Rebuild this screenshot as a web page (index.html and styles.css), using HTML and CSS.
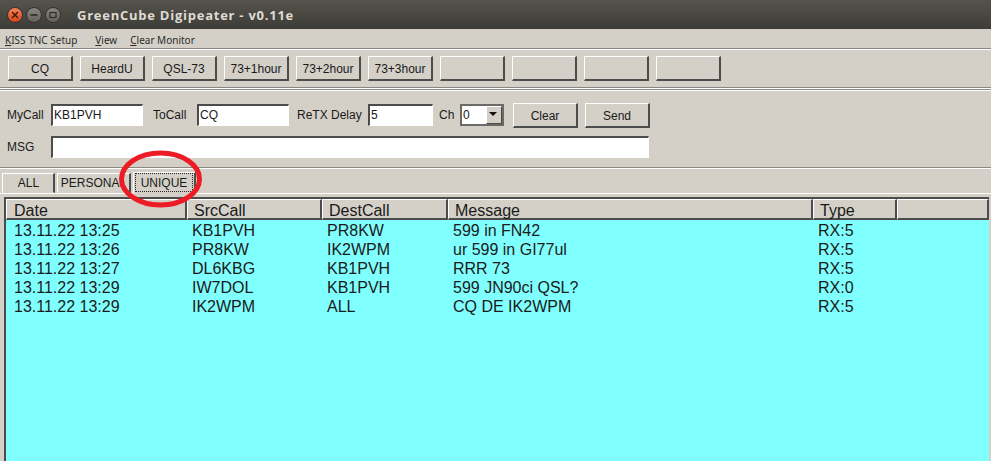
FILE: index.html
```html
<!DOCTYPE html>
<html lang="en">
<head>
    <meta charset="UTF-8">
    <title>GreenCube Digipeater - v0.11e</title>
    <link rel="stylesheet" href="styles.css">
</head>
<body>
    <div class="window">
        <div class="titlebar">
            <div class="win-buttons">
                <span class="win-btn win-close">
                    <svg width="8" height="8" viewBox="0 0 8 8"><path d="M1 1L7 7M7 1L1 7" stroke="#4a1a08" stroke-width="1.6"/></svg>
                </span>
                <span class="win-btn">
                    <svg width="8" height="8" viewBox="0 0 8 8"><path d="M0.5 4H7.5" stroke="#2e2d29" stroke-width="1.6"/></svg>
                </span>
                <span class="win-btn">
                    <svg width="8" height="8" viewBox="0 0 8 8"><rect x="1" y="1.5" width="6" height="5" fill="none" stroke="#2e2d29" stroke-width="1.2"/></svg>
                </span>
            </div>
            <div class="title">GreenCube Digipeater - v0.11e</div>
        </div>

        <div class="menubar">
            <span class="menu-item menu-kiss"><u>K</u>ISS TNC Setup</span>
            <span class="menu-item menu-view"><u>V</u>iew</span>
            <span class="menu-item"><u>C</u>lear Monitor</span>
        </div>

        <div class="toolbar">
            <button class="btn">CQ</button>
            <button class="btn">HeardU</button>
            <button class="btn">QSL-73</button>
            <button class="btn">73+1hour</button>
            <button class="btn">73+2hour</button>
            <button class="btn">73+3hour</button>
            <button class="btn"></button>
            <button class="btn"></button>
            <button class="btn"></button>
            <button class="btn"></button>
        </div>

        <div class="compose">
            <div class="compose-row">
                <label class="lbl lbl-mycall">MyCall</label>
                <div class="field field-call">KB1PVH</div>
                <label class="lbl lbl-tocall">ToCall</label>
                <div class="field field-call">CQ</div>
                <label class="lbl lbl-retx">ReTX Delay</label>
                <div class="field field-delay">5</div>
                <label class="lbl lbl-ch">Ch</label>
                <div class="combo">
                    <span class="combo-value">0</span>
                    <span class="combo-arrow"></span>
                </div>
                <button class="btn btn-clear">Clear</button>
                <button class="btn btn-send">Send</button>
            </div>
            <div class="compose-row msg-row">
                <label class="lbl lbl-mycall">MSG</label>
                <div class="field field-msg"></div>
            </div>
        </div>

        <div class="tabs">
            <div class="tab tab-all">ALL</div>
            <div class="tab tab-personal">PERSONAL</div>
            <div class="tab tab-unique"><span class="tab-focus">UNIQUE</span></div>
            <!-- hand drawn circle over the tab -->
            <svg class="circle" width="86" height="62" viewBox="0 0 86 62">
                <ellipse cx="41.5" cy="31" rx="39" ry="26" fill="none" stroke="#ed1c24" stroke-width="5"/>
            </svg>
        </div>

        <div class="monitor">
            <div class="head">
                <div class="head-cell col-date">Date</div>
                <div class="head-cell col-src">SrcCall</div>
                <div class="head-cell col-dest">DestCall</div>
                <div class="head-cell col-msg">Message</div>
                <div class="head-cell col-type">Type</div>
                <div class="head-cell col-rest"></div>
            </div>
            <div class="rows">
                <div class="row"><span class="col-date">13.11.22 13:25</span><span class="col-src">KB1PVH</span><span class="col-dest">PR8KW</span><span class="col-msg">599 in FN42</span><span class="col-type">RX:5</span></div>
                <div class="row"><span class="col-date">13.11.22 13:26</span><span class="col-src">PR8KW</span><span class="col-dest">IK2WPM</span><span class="col-msg">ur 599 in GI77ul</span><span class="col-type">RX:5</span></div>
                <div class="row"><span class="col-date">13.11.22 13:27</span><span class="col-src">DL6KBG</span><span class="col-dest">KB1PVH</span><span class="col-msg">RRR 73</span><span class="col-type">RX:5</span></div>
                <div class="row"><span class="col-date">13.11.22 13:29</span><span class="col-src">IW7DOL</span><span class="col-dest">KB1PVH</span><span class="col-msg">599 JN90ci QSL?</span><span class="col-type">RX:0</span></div>
                <div class="row"><span class="col-date">13.11.22 13:29</span><span class="col-src">IK2WPM</span><span class="col-dest">ALL</span><span class="col-msg">CQ DE IK2WPM</span><span class="col-type">RX:5</span></div>
            </div>
        </div>
    </div>
</body>
</html>
```

FILE: styles.css
```css
html, body {
    margin: 0;
    height: 100%;
    overflow: hidden;
}
body {
    font-family: "Liberation Sans", Arial, sans-serif;
    font-size: 12px;
    color: #1a1a1a;
    background-color: #d4d0c8;
}
.window {
    display: flex;
    flex-direction: column;
    height: 461px;
}

/* Title bar */
.titlebar {
    display: flex;
    align-items: center;
    height: 29px;
    flex: none;
    background: linear-gradient(to bottom, #55534c, #3d3c37);
    box-sizing: border-box;
}
.win-buttons {
    display: flex;
    gap: 3px;
    margin-left: 7px;
}
.win-btn {
    display: flex;
    align-items: center;
    justify-content: center;
    box-sizing: border-box;
    width: 16px;
    height: 16px;
    border-radius: 50%;
    border: 1px solid #33322e;
    background: linear-gradient(to bottom, #88867f, #63615a);
}
.win-close {
    background: linear-gradient(to bottom, #f4855a, #d9451a);
}
.title {
    margin-left: 16px;
    font-family: "Open Sans", "Noto Sans", sans-serif;
    font-size: 13px;
    font-weight: 700;
    color: #dfdbd2;
    letter-spacing: 0.75px;
}

/* Menu */
.menubar {
    display: flex;
    align-items: center;
    height: 19px;
    flex: none;
    padding-left: 5px;
    padding-bottom: 1px;
    padding-top: 3px;
    font-family: "Noto Sans", sans-serif;
    font-size: 10px;
    color: #2b2b2b;
    box-sizing: border-box;
}
.menu-kiss { margin-right: 18px; }
.menu-view { margin-right: 13px; }

/* Buttons */
.btn {
    box-sizing: border-box;
    width: 65px;
    height: 25px;
    padding: 2px 0 0;
    font-family: inherit;
    font-size: 12px;
    color: #1a1a1a;
    background-color: #d4d0c8;
    border: 1px solid;
    border-color: #ffffff #4c4c4c #4c4c4c #ffffff;
    border-right-width: 2px;
    border-bottom-width: 2px;
    border-radius: 0;
}
.toolbar {
    display: flex;
    gap: 7px;
    flex: none;
    height: 40px;
    box-sizing: border-box;
    padding: 7px 0 0 8px;
    border-top: 1px solid #8a8884;
    border-bottom: 1px solid #8a8884;
    box-shadow: inset 0 1px 0 #fff, 0 1px 0 #fff;
}

/* Message form */
.compose {
    flex: none;
    height: 79px;
    box-sizing: border-box;
    padding: 13px 0 0 7px;
    border-top: 1px solid #8a8884;
    border-bottom: 1px solid #8a8884;
    box-shadow: inset 0 1px 0 #fff, 0 1px 0 #fff;
    margin-top: 1px;
}
.compose-row {
    display: flex;
    align-items: center;
    height: 25px;
}
.msg-row {
    margin-top: 7px;
}
.lbl {
    padding-bottom: 2px;
}
.lbl-mycall { width: 44px; }
.lbl-tocall { margin-left: 10px; width: 44px; }
.lbl-retx { margin-left: 8px; width: 71px; }
.lbl-ch { margin-left: 6px; width: 21px; }
.field, .combo {
    box-sizing: border-box;
    height: 22px;
    margin-bottom: 1px;
    background-color: #fff;
    border: 1px solid;
    border-color: #4c4c4c #fff #fff #4c4c4c;
    border-top-width: 2px;
    border-left-width: 2px;
    padding-left: 1px;
    line-height: 18px;
}
.field-call { width: 92px; }
.field-delay { width: 65px; }
.field-msg { width: 598px; }
.combo {
    position: relative;
    width: 44px;
    border: 2px solid #6a6a66;
}
.combo-arrow {
    position: absolute;
    top: 0;
    right: 0;
    width: 16px;
    height: 18px;
    background-color: #d4d0c8;
    border: 1px solid;
    border-color: #fff #4c4c4c #4c4c4c #fff;
    box-sizing: border-box;
}
.combo-arrow::after {
    content: "";
    position: absolute;
    left: 2px;
    top: 5px;
    border-left: 4px solid transparent;
    border-right: 4px solid transparent;
    border-top: 4px solid #111;
}
.btn-clear { margin-left: 9px; }
.btn-send { margin-left: 7px; }

/* Tabs */
.tabs {
    position: relative;
    display: flex;
    align-items: flex-end;
    flex: none;
    height: 26px;
    padding-left: 2px;
    box-sizing: border-box;
    border-bottom: 1px solid #fff;
}
.tab {
    box-sizing: border-box;
    height: 20px;
    line-height: 18px;
    text-align: center;
    border: 1px solid;
    border-color: #fff #4c4c4c transparent #fff;
    border-right-width: 2px;
    margin-right: 2px;
}
.tab-all { width: 53px; padding-left: 1px; }
.tab-personal { width: 74px; }
.tab-unique {
    width: 63px;
    height: 22px;
    margin-bottom: -1px;
    padding: 0 1px;
    background-color: #d4d0c8;
    line-height: 18px;
}
.tab-focus {
    display: block;
    border: 1px dotted #222;
    height: 19px;
    box-sizing: border-box;
}
.circle {
    position: absolute;
    left: 119px;
    top: -20px;
}

/* Monitor table */
.monitor {
    flex: 1;
    margin: 3px 2px 0 4px;
    display: flex;
    flex-direction: column;
    border-top: 2px solid #4c4c4c;
    border-left: 2px solid #4c4c4c;
    min-height: 0;
}
.head {
    display: flex;
    flex: none;
    height: 21px;
    font-size: 16px;
    background-color: #d4d0c8;
}
.head-cell {
    box-sizing: border-box;
    height: 21px;
    line-height: 22px;
    padding-left: 6px;
    border: 1px solid;
    border-color: #fff #4c4c4c #4c4c4c #fff;
    border-right-width: 2px;
    border-bottom-width: 2px;
}
.head .col-date { padding-left: 7px; }
.col-date { width: 181px; }
.col-src { width: 135px; }
.col-dest { width: 126px; }
.col-msg { width: 365px; }
.col-type { width: 84px; }
.col-rest { flex: 1; }
.rows {
    flex: 1;
    background-color: #80ffff;
    padding-top: 1px;
}
.row {
    display: flex;
    height: 19px;
    line-height: 19px;
    font-size: 16px;
}
.row span {
    display: block;
    box-sizing: border-box;
    padding-left: 5px;
}
.row .col-date { padding-left: 8px; }
```
